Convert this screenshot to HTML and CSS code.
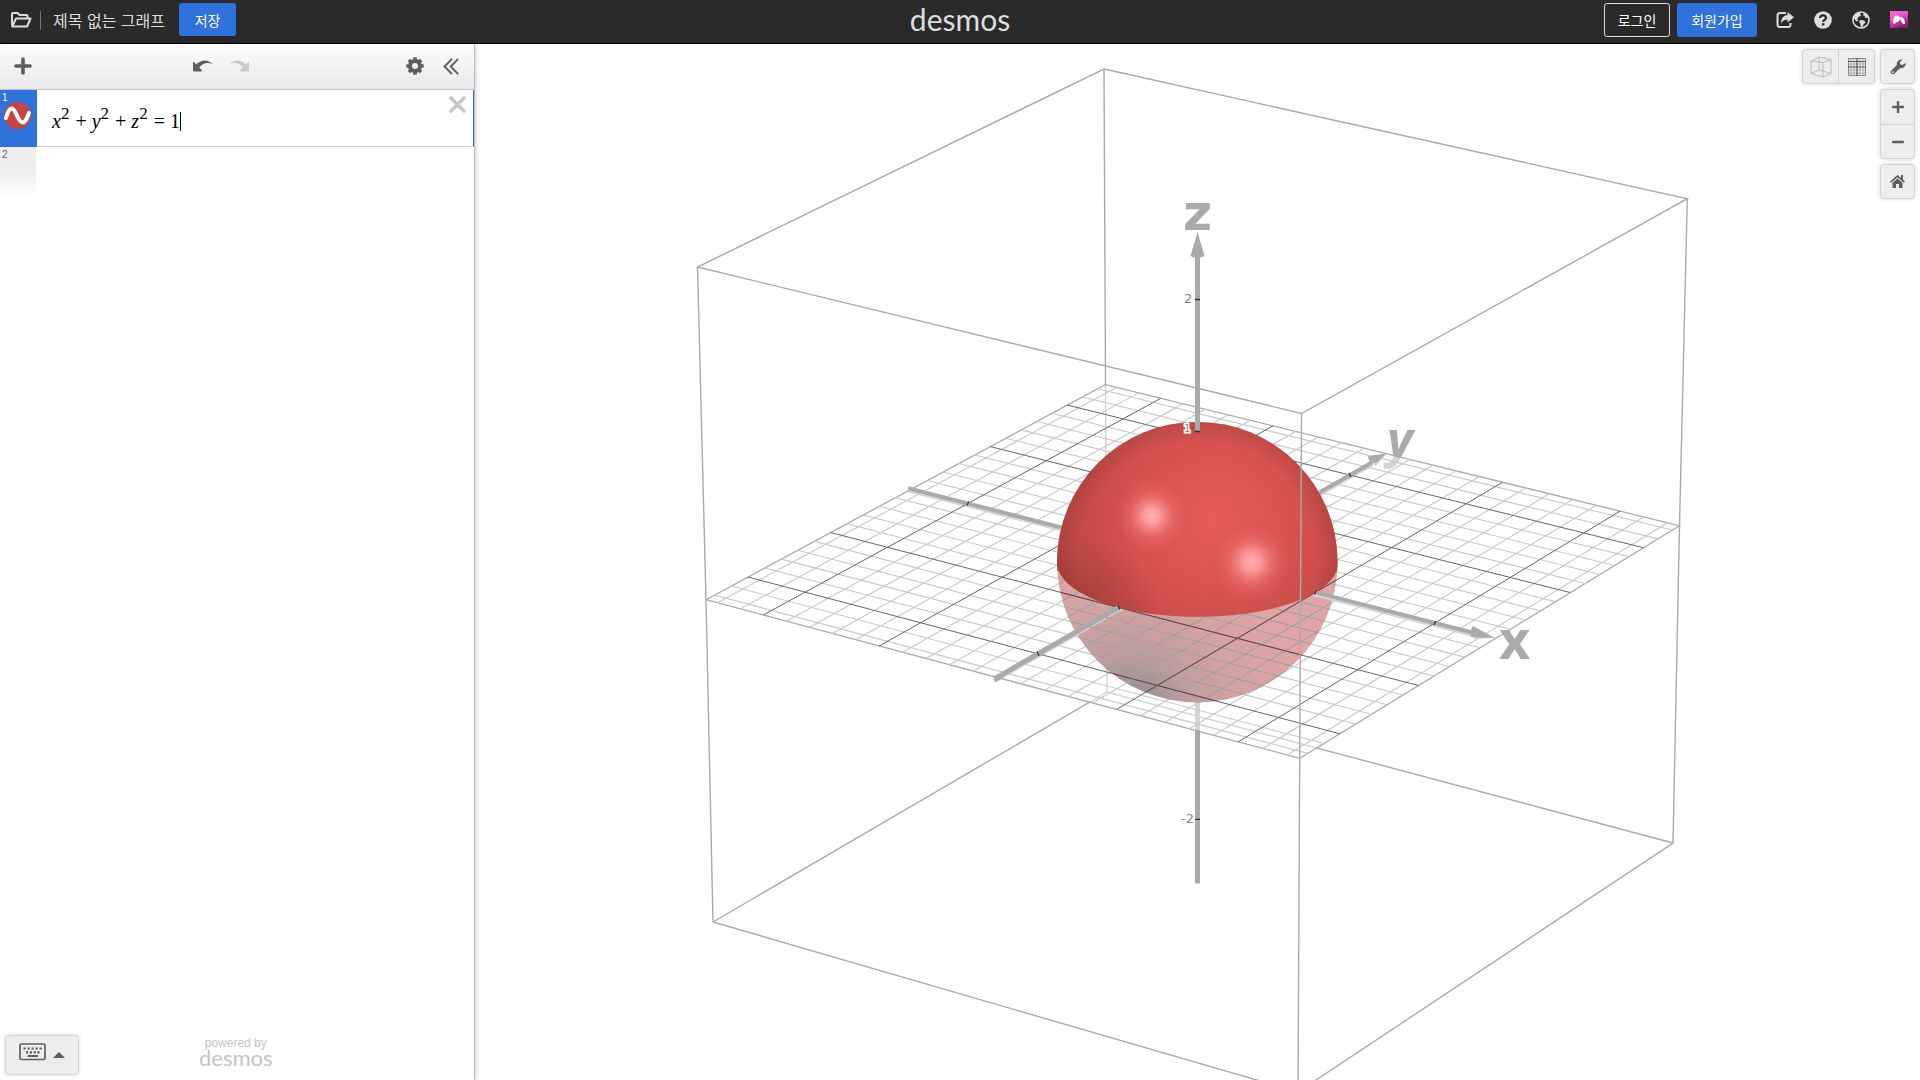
FILE: index.html
```html
<!DOCTYPE html>
<html lang="ko">
<head>
  <meta charset="UTF-8">
  <meta name="viewport" content="width=device-width, initial-scale=1">
  <title>Desmos | 3D</title>
  <link rel="stylesheet" href="styles.css">
</head>
<body>
  <header class="header">
    <div class="header-left">
      <button class="icon-btn folder-btn" aria-label="그래프 열기">
        <svg width="22" height="18" viewBox="0 0 22 18" fill="none" stroke="#ddd" stroke-width="2" stroke-linejoin="round"><path d="M2 14V3.200Q2 2 3.200 2H7.500L9.500 4H16.500Q17.600 4 17.600 5.200V7M2.200 15.500L6 7.500H20.500L17 15.500Z"/></svg>
      </button>
      <span class="divider"></span>
      <button class="graph-title">제목 없는 그래프</button>
      <button class="btn btn-blue save-btn">저장</button>
    </div>
    <a class="logo" href="#">desmos</a>
    <div class="header-right">
      <button class="btn btn-outline">로그인</button>
      <button class="btn btn-blue signup-btn">회원가입</button>
      <button class="icon-btn" aria-label="공유">
        <svg width="18" height="18" viewBox="0 0 18 18"><path d="M10 2H4Q1.500 2 1.500 4.500V13.500Q1.500 16 4 16H12Q14.500 16 14.500 13.500V12" fill="none" stroke="#ddd" stroke-width="2"/><path d="M11.500 1L18 6.300L11.500 11.500V8.600Q7.500 8.500 5 12.500Q5 4.500 11.500 4Z" fill="#ddd"/></svg>
      </button>
      <button class="icon-btn" aria-label="도움말">
        <svg width="18" height="18" viewBox="0 0 18 18"><circle cx="9" cy="9" r="8.800" fill="#ddd"/><path d="M6 7Q6 4.300 9 4.300T12 6.800Q12 8 10.500 8.900Q9.300 9.500 9.300 11" fill="none" stroke="#2a2a2a" stroke-width="2.200"/><rect x="8" y="12.200" width="2.400" height="2.300" fill="#2a2a2a"/></svg>
      </button>
      <button class="icon-btn" aria-label="언어">
        <svg width="18" height="18" viewBox="0 0 18 18"><circle cx="9" cy="9" r="8" fill="none" stroke="#ddd" stroke-width="1.600"/><path d="M2 5L5 1.800L9 1L8 3L9.500 4L7.500 5.500L6 6.500L5 8L6.500 9.500L5 10.500L2 8ZM11 1.500L14 3L16.500 6.500L14.500 7L12.500 6.500L13 5L11 4.500L11.500 3ZM8 9L12 9.500L13.500 11.500L11.500 13.500L10 16.500L8.500 15L8.500 12.500L7 11Z" fill="#ddd"/></svg>
      </button>
      <button class="icon-btn" aria-label="내 계정">
        <svg width="18" height="18" viewBox="0 0 18 18"><defs><linearGradient id="avatarFill" x1="0" y1="0" x2=".5" y2="1"><stop offset="0" stop-color="#ff6be0"/><stop offset=".45" stop-color="#ee55cc"/><stop offset="1" stop-color="#8c1a70"/></linearGradient></defs><rect width="18" height="17" fill="url(#avatarFill)"/><path d="M3 12Q3 4.500 7 4.500Q8.500 4.500 9.500 6Q14.500 5.500 15 12Q15 13.500 13 13Q11.500 11 10 8Q9 12 6.500 11L4.500 13Z" fill="#fff"/></svg>
      </button>
    </div>
  </header>

  <main class="main">
    <aside class="panel">
      <div class="toolbar">
        <button class="icon-btn" aria-label="항목 추가">
          <svg width="18" height="18" viewBox="0 0 18 18"><path d="M9 2V16M2 9H16" stroke="#5e5e5e" stroke-width="3.600" stroke-linecap="round"/></svg>
        </button>
        <div class="history">
          <button class="icon-btn" aria-label="실행 취소">
            <svg width="20" height="12" viewBox="0 0 20 12"><path d="M0 1.500L3 4.300Q12-3.500 20 4.300Q12 .800 6.200 7.500L9 10.500Q9 11.500 8 11.500H1Q0 11.500 0 10.500Z" fill="#5e5e5e"/></svg>
          </button>
          <button class="icon-btn" aria-label="다시 실행" disabled>
            <svg width="20" height="12" viewBox="0 0 20 12"><path d="M20 1.500L17 4.300Q8-3.500 0 4.300Q8 .800 13.800 7.500L11 10.500Q11 11.500 12 11.500H19Q20 11.500 20 10.500Z" fill="#c9c9c9"/></svg>
          </button>
        </div>
        <div class="tools">
          <button class="icon-btn" aria-label="목록 편집">
            <svg width="18" height="18" viewBox="0 0 18 18"><circle cx="9" cy="9" r="5" fill="none" stroke="#5e5e5e" stroke-width="4"/><path d="M9 .300V4M9 14V17.700M.300 9H4M14 9H17.700M2.900 2.900L5.500 5.500M12.500 12.500L15.100 15.100M2.900 15.100L5.500 12.500M12.500 5.500L15.100 2.900" stroke="#5e5e5e" stroke-width="3.600"/></svg>
          </button>
          <button class="icon-btn" aria-label="목록 숨기기">
            <svg width="16" height="17" viewBox="0 0 16 17" fill="none" stroke="#5e5e5e" stroke-width="1.900"><path d="M9 .800L1.500 8.500L9 16.200M15.200 .800L7.700 8.500L15.200 16.200"/></svg>
          </button>
        </div>
      </div>

      <div class="expression active">
        <div class="tab">
          <span class="number">1</span>
          <button class="icon-btn color-btn" aria-label="수식 1 숨기기">
            <svg width="27" height="27" viewBox="0 0 27 27"><circle cx="13.500" cy="13.500" r="13.500" fill="#c74440"/><path d="M2 16C4.500 8 6 6 8 6.500C12 7.500 14 20.500 18.500 20.500C21.500 20.500 23 16 25 11" fill="none" stroke="#fff" stroke-width="4" stroke-linecap="round"/></svg>
          </button>
        </div>
        <div class="math" role="textbox" tabindex="0" aria-label="수식 1"><i>x</i><sup>2</sup><b>+</b><i>y</i><sup>2</sup><b>+</b><i>z</i><sup>2</sup><b>=</b><span>1</span><span class="caret"></span></div>
        <button class="icon-btn delete-btn" aria-label="수식 삭제">
          <svg width="17" height="17" viewBox="0 0 17 17"><path d="M2 2L15 15M15 2L2 15" stroke="#c8c8c8" stroke-width="3.600" stroke-linecap="round"/></svg>
        </button>
      </div>
      <div class="expression next">
        <div class="tab"><span class="number">2</span></div>
      </div>

      <div class="panel-footer">
        <button class="keypad-btn" aria-label="키패드 표시">
          <svg width="27" height="18" viewBox="0 0 27 18" fill="none" stroke="#5e5e5e"><rect x="1" y="1" width="25" height="15.500" rx="1.500" stroke-width="1.700"/><path d="M4.500 5.500H23" stroke-width="2.200" stroke-dasharray="2.200 1.800"/><path d="M7 9.300H21" stroke-width="2.200" stroke-dasharray="2.200 1.600"/><path d="M8.500 13H19" stroke-width="2"/></svg>
          <svg width="12" height="6" viewBox="0 0 12 6"><path d="M6 0L12 6H0Z" fill="#5e5e5e"/></svg>
        </button>
        <div class="powered">
          <span>powered by</span>
          <a href="#">desmos</a>
        </div>
      </div>
    </aside>

    <section class="graph">
      <svg class="scene" viewBox="475 44 1445 1036" preserveAspectRatio="xMidYMid slice" aria-label="3D 그래프">
        <defs>
          <radialGradient id="sphereTop" gradientUnits="userSpaceOnUse" cx="1215" cy="520" r="195">
            <stop offset="0" stop-color="#e55b58"/>
            <stop offset=".35" stop-color="#da5451"/>
            <stop offset=".65" stop-color="#c64c49"/>
            <stop offset=".85" stop-color="#b84744"/>
            <stop offset="1" stop-color="#a8403e"/>
          </radialGradient>
          <radialGradient id="edgeShade" gradientUnits="userSpaceOnUse" cx="1197" cy="562" r="140">
            <stop offset=".85" stop-color="#5a1e1c" stop-opacity="0"/>
            <stop offset="1" stop-color="#5a1e1c" stop-opacity=".14"/>
          </radialGradient>
          <radialGradient id="cornerShade" gradientUnits="userSpaceOnUse" cx="1075" cy="625" r="90">
            <stop offset="0" stop-color="#7a2a28" stop-opacity=".45"/>
            <stop offset="1" stop-color="#7a2a28" stop-opacity="0"/>
          </radialGradient>
          <radialGradient id="shine">
            <stop offset="0" stop-color="#ffb0b0"/>
            <stop offset=".25" stop-color="#ffa3a3" stop-opacity=".85"/>
            <stop offset=".6" stop-color="#f98783" stop-opacity=".3"/>
            <stop offset="1" stop-color="#f07570" stop-opacity="0"/>
          </radialGradient>
          <radialGradient id="sphereBottom" gradientUnits="userSpaceOnUse" cx="1130" cy="710" r="180">
            <stop offset="0" stop-color="#1e1818"/>
            <stop offset=".15" stop-color="#3d2b2a"/>
            <stop offset=".35" stop-color="#853c3a"/>
            <stop offset=".6" stop-color="#a84543"/>
            <stop offset="1" stop-color="#c14d4b"/>
          </radialGradient>
          <clipPath id="upperHalf">
            <rect x="1050" y="410" width="300" height="161"/>
            <path id="disc"/>
          </clipPath>
          <clipPath id="sphereOutline">
            <circle cx="1197.300" cy="562.200" r="140.300"/>
          </clipPath>
        </defs>

        <!-- everything under or behind the xy plane -->
        <g class="box">
          <path d="M1104 69L1107 692M713 922L1107 692L1673 843"/>
        </g>
        <path class="axis" d="M1197.500 690V740" stroke-width="5"/>
        <circle cx="1197.300" cy="562.200" r="140.300" fill="url(#sphereBottom)"/>
        <g id="axesBelow"></g>
        <path class="solid" d="M1470 632L1495 638L1474 639ZM1369 460L1386 454L1376 466Z"/>
        <text class="axis-name label-y" x="1387" y="457">y</text>

        <path id="plane" class="plane"/>
        <g id="grid"></g>
        <g id="gridOnSphere" class="shaded" clip-path="url(#sphereOutline)"></g>
        <g id="axesAbove"></g>
        <path class="solid" d="M1495 638L1473 626Q1469 631 1471 637ZM1386.500 453.500L1368 456Q1368 462 1376 463Z"/>

        <!-- upper half of the sphere -->
        <g clip-path="url(#upperHalf)">
          <circle cx="1197.300" cy="562.200" r="140.300" fill="url(#sphereTop)"/>
          <circle cx="1197.300" cy="562.200" r="140.300" fill="url(#edgeShade)"/>
          <circle cx="1197.300" cy="562.200" r="140.300" fill="url(#cornerShade)"/>
          <circle cx="1151.700" cy="515.700" r="36" fill="url(#shine)"/>
          <circle cx="1251.700" cy="562" r="38" fill="url(#shine)"/>
        </g>
        <g id="axesFront"></g>

        <!-- z axis -->
        <path class="axis" d="M1197.500 255V431.500M1197.500 730V883.500" stroke-width="5"/>
        <path class="solid" d="M1197.500 232L1204.500 256Q1197.500 260 1190.500 256Z"/>
        <path class="tick" d="M1195 299.500H1200M1195 431.500H1200M1195 819.300H1200"/>
        <text class="tick-label" x="1184" y="303">2</text>
        <text class="tick-label halo" x="1184" y="432">1</text>
        <text class="tick-label" x="1181" y="823">-2</text>
        <text class="axis-name" x="1183" y="230">z</text>
        <text class="axis-name label-x" x="1499" y="659">x</text>

        <!-- near edges of the bounding box -->
        <g class="box">
          <path d="M1104 69L1687.300 198.700L1301.500 413.500L697.500 267Z"/>
          <path d="M697.500 267L706 600L713 922L1298 1092L1673 843L1679.500 526L1687.300 198.700M1301.500 413.500L1299.700 758L1298 1092"/>
        </g>
      </svg>

      <div class="controls">
        <div class="btn-group row">
          <button aria-label="상자 표시">
            <svg width="22" height="22" viewBox="0 0 22 22" fill="none" stroke="#bbb" stroke-width="1"><path d="M1 5L13 6.500V21L1 17.500ZM13 6.500L21 3.500V17.500L13 21M1 5L9 1L21 3.500M9 1V14L1 17.500M9 14L21 17.500"/></svg>
          </button>
          <button aria-label="격자 표시">
            <svg width="18" height="18" viewBox="0 0 18 18" fill="none"><path d="M3 0V18M6 0V18M12 0V18M15 0V18M0 6H18M0 12H18M0 15H18" stroke="#999" stroke-width=".700"/><path d="M.500 .500H17.500V17.500H.500Z" stroke="#888"/><path d="M9 0V18M0 3.500H18M0 9H18" stroke="#555" stroke-width="1.200"/></svg>
          </button>
        </div>
        <div class="controls-column">
          <div class="btn-group">
            <button aria-label="그래프 설정">
              <svg width="16" height="16" viewBox="0 0 16 16"><path d="M3 13L9 7" stroke="#5e5e5e" stroke-width="4.400" stroke-linecap="round"/><path d="M12.500 .700L9.800 3.200L10.300 5.500L12.600 6L15.600 3.800Q16 7.500 12.800 8.900Q10 9.700 7.700 8.200Q5.800 5 7.700 2.300Q9.500 .200 12.500 .700Z" fill="#5e5e5e"/><circle cx="2.900" cy="13.100" r=".900" fill="#ededed"/></svg>
            </button>
          </div>
          <div class="btn-group zoom">
            <button aria-label="확대">
              <svg width="12" height="12" viewBox="0 0 12 12"><path d="M6 1V11M1 6H11" stroke="#5e5e5e" stroke-width="2.400" stroke-linecap="round"/></svg>
            </button>
            <button aria-label="축소">
              <svg width="12" height="12" viewBox="0 0 12 12"><path d="M1 6H11" stroke="#5e5e5e" stroke-width="2.400" stroke-linecap="round"/></svg>
            </button>
          </div>
          <div class="btn-group">
            <button aria-label="기본 보기">
              <svg width="15" height="13" viewBox="0 0 15 13"><path d="M.500 7.200L7.500 1.200L14.500 7.200" fill="none" stroke="#5e5e5e" stroke-width="1.700"/><path d="M11 0H13V5L11 3.500ZM2.500 7.700L7.500 3.500L12.500 7.700V13H9V9H6V13H2.500Z" fill="#5e5e5e"/></svg>
            </button>
          </div>
        </div>
      </div>
    </section>
  </main>
  <script src="script.js"></script>
</body>
</html>
```
FILE: styles.css
```css
* {
  box-sizing: border-box;
}

body {
  margin: 0;
  height: 100vh;
  display: flex;
  flex-direction: column;
  overflow: hidden;
  background: #fff;
  font-family: "Noto Sans CJK KR", "Liberation Sans", sans-serif;
}

button {
  margin: 0;
  padding: 0;
  border: none;
  background: none;
  font: inherit;
  cursor: pointer;
}

a {
  text-decoration: none;
}

svg {
  display: block;
}

.icon-btn {
  display: flex;
}

/* header */
.header {
  display: grid;
  grid-template-columns: 1fr auto 1fr;
  flex: none;
  height: 44px;
  background: #2a2a2a;
  border-bottom: 1px solid #000;
}

.header-left,
.header-right {
  display: flex;
  align-items: center;
}

.header-left {
  padding: 0 0 4px 10px;
}

.header-right {
  justify-content: flex-end;
  gap: 20px;
  padding: 0 12px 3px 0;
}

.divider {
  width: 1px;
  height: 19px;
  margin: 2px 12px 0 8px;
  background: #777;
}

.graph-title {
  color: #ddd;
  font-size: 16px;
  margin-right: 14px;
}

.btn {
  height: 34px;
  border-radius: 3px;
  font-size: 14px;
  line-height: 20px;
  color: #fff;
}

.btn-blue {
  background: #2f72dc;
}

.btn-outline {
  width: 66px;
  border: 1px solid #ddd;
  margin-right: -13px;
}

.save-btn {
  width: 57px;
  height: 33px;
}

.signup-btn {
  width: 80px;
  margin-right: -1px;
}

.logo {
  color: #ddd;
  font-family: Lato, sans-serif;
  font-size: 30px;
  line-height: 38px;
}

/* expression list */
.main {
  display: flex;
  flex: 1;
  min-height: 0;
}

.panel {
  display: flex;
  flex-direction: column;
  flex: none;
  width: 475px;
  border-right: 1px solid #bbb;
  box-shadow: 0 0 6px rgba(0, 0, 0, 0.25);
  background: #fff;
  z-index: 1;
}

.toolbar {
  display: grid;
  grid-template-columns: 1fr auto 1fr;
  align-items: center;
  height: 46px;
  padding: 0 15px 1px 14px;
  background: linear-gradient(#fcfcfc, #e9e9e9);
  border-bottom: 1px solid #c4c4c4;
}

.history {
  display: flex;
  gap: 16px;
  margin-left: -32px;
}

.tools {
  display: flex;
  justify-content: flex-end;
  align-items: center;
  gap: 19px;
}

.expression {
  display: flex;
}

.active {
  height: 57px;
  border-right: 1px solid #2f72dc;
  border-bottom: 1px solid #d3d3d3;
}

.tab {
  width: 37px;
  padding: 3px 2px;
}

.active .tab {
  height: 57px;
  background: #2f72dc;
  color: #fff;
}

.next .tab {
  width: 36px;
  height: 50px;
  background: linear-gradient(#eee 50%, #fff);
  color: #666;
}

.number {
  display: block;
  font-family: "Liberation Sans", sans-serif;
  font-size: 10px;
  line-height: 9px;
}

.color-btn {
  margin-left: 2px;
}

.math {
  display: flex;
  flex: 1;
  align-items: baseline;
  padding: 19px 0 0 15px;
  font-family: "Liberation Serif", serif;
  font-size: 20px;
  line-height: 24px;
  outline: none;
}

.math sup {
  position: relative;
  top: -9px;
  font-size: 17px;
  line-height: 1;
  vertical-align: baseline;
}

.math b {
  font-weight: normal;
  margin: 0 5px 0 6px;
}

.caret {
  align-self: flex-start;
  width: 1px;
  height: 19px;
  margin-top: 3px;
  background: #000;
}

.delete-btn {
  align-self: flex-start;
  padding: 6px 7px;
}

.panel-footer {
  display: flex;
  align-items: flex-end;
  margin-top: auto;
  padding: 5px;
}

.keypad-btn {
  display: flex;
  align-items: center;
  justify-content: center;
  gap: 7px;
  width: 74px;
  height: 40px;
  padding-bottom: 6px;
  border: 1px solid #d6d6d6;
  border-radius: 4px;
  background: #ededed;
  box-shadow: 0 0 4px rgba(0, 0, 0, 0.15);
}

.keypad-btn svg + svg {
  margin-top: 6px;
}

.powered {
  display: flex;
  flex-direction: column;
  align-items: center;
  margin-left: 120px;
  padding-bottom: 8px;
  color: #c4c4c4;
  font-family: "Liberation Sans", sans-serif;
  font-size: 12px;
  line-height: 12px;
}

.powered a {
  color: #c4c4c4;
  font-family: Lato, sans-serif;
  font-size: 22px;
  line-height: 18px;
}

/* graph paper */
.graph {
  position: relative;
  flex: 1;
  min-width: 0;
}

.scene {
  width: 100%;
  height: 100%;
}

.box {
  fill: none;
  stroke: #aaa;
  stroke-width: 1.4;
}

.plane {
  fill: rgba(255, 255, 255, 0.5);
  stroke: #aaa;
  stroke-width: 1.3;
}

.minor {
  stroke: #c8c8c8;
  stroke-width: 1.1;
}

.major {
  stroke: #666;
  stroke-width: 1;
}

.shaded .minor {
  stroke: #a89696;
}

.shaded .major {
  stroke: #6b4a4a;
}

.axis {
  stroke: #aaa;
}

.solid {
  fill: #aaa;
}

.tick {
  stroke: #333;
  stroke-width: 1.3;
}

.tick-label {
  fill: #888;
  font-family: "DejaVu Sans", sans-serif;
  font-size: 13px;
}

.halo {
  stroke: #fff;
  stroke-width: 3px;
  paint-order: stroke;
  font-size: 10px;
}

.axis-name {
  fill: #aaa;
  font-family: "DejaVu Sans", sans-serif;
  font-size: 50px;
  font-weight: bold;
}

.label-x,
.label-y {
  font-family: "Liberation Sans Narrow", "Open Sans", sans-serif;
  font-size: 54px;
}

.label-y {
  font-size: 50px;
  font-style: italic;
}

/* floating buttons */
.controls {
  position: absolute;
  top: 5px;
  right: 5px;
  display: flex;
  align-items: flex-start;
  gap: 5px;
}

.controls-column {
  display: flex;
  flex-direction: column;
  gap: 5px;
}

.btn-group {
  display: flex;
  flex-direction: column;
  border: 1px solid #d3d3d3;
  border-radius: 4px;
  background: #ededed;
  box-shadow: 0 0 4px rgba(0, 0, 0, 0.15);
}

.btn-group button {
  display: flex;
  align-items: center;
  justify-content: center;
  width: 33px;
  height: 33px;
}

.zoom button {
  height: 34px;
}

.btn-group button + button {
  border-top: 1px solid #d3d3d3;
}

.row {
  flex-direction: row;
}

.row button {
  width: 35px;
}

.row button + button {
  width: 36px;
  border-top: none;
  border-left: 1px solid #d3d3d3;
}
```
FILE: script.js
```js
const SVG_NS = "http://www.w3.org/2000/svg";
const range = 2.5;

// screen corners of the xy plane: (-,-) (+,-) (+,+) (-,+)
const corners = [[706, 599.7], [1299.7, 758.3], [1679.4, 525.7], [1105.3, 384.7]];

// perspective map from the unit square to the four corners
const [[x0, y0], [x1, y1], [x2, y2], [x3, y3]] = corners;
const dx1 = x1 - x2, dx2 = x3 - x2, dx3 = x0 - x1 + x2 - x3;
const dy1 = y1 - y2, dy2 = y3 - y2, dy3 = y0 - y1 + y2 - y3;
const det = dx1 * dy2 - dx2 * dy1;
const g = (dx3 * dy2 - dx2 * dy3) / det;
const h = (dx1 * dy3 - dx3 * dy1) / det;

function project(x, y) {
  const u = (x + range) / (2 * range);
  const v = (y + range) / (2 * range);
  const w = g * u + h * v + 1;
  return [
    ((x1 - x0 + g * x1) * u + (x3 - x0 + h * x3) * v + x0) / w,
    ((y1 - y0 + g * y1) * u + (y3 - y0 + h * y3) * v + y0) / w
  ];
}

function drawLine(parent, from, to, className, width, drop = 0) {
  const [ax, ay] = project(...from);
  const [bx, by] = project(...to);
  const line = document.createElementNS(SVG_NS, "line");
  line.setAttribute("x1", ax);
  line.setAttribute("y1", ay + drop);
  line.setAttribute("x2", bx);
  line.setAttribute("y2", by + drop);
  line.setAttribute("class", className);
  if (width) line.setAttribute("stroke-width", width);
  document.getElementById(parent).appendChild(line);
}

function drawGrid(parent) {
  // minor lines first so the major ones stay on top
  for (const major of [false, true]) {
    for (let i = -12; i <= 12; i++) {
      if ((i % 5 === 0) !== major || i === 0) continue;
      const t = i / 5;
      const name = major ? "major" : "minor";
      drawLine(parent, [t, -range], [t, range], name);
      drawLine(parent, [-range, t], [range, t], name);
    }
  }
}

function drawAxes() {
  const start = -range - 0.03;
  const end = range - 0.2;
  drawLine("axesBelow", [start, 0], [end, 0], "axis", 4, 2);
  drawLine("axesBelow", [0, start], [0, end], "axis", 4, 2);
  drawLine("axesAbove", [start, 0], [0, 0], "axis", 4);
  drawLine("axesAbove", [0, 0], [0, end], "axis", 4);
  drawLine("axesFront", [1, 0], [end, 0], "axis", 4);
  drawLine("axesFront", [0, start], [0, -1], "axis", 5);

  for (const t of [-2, 1, 2]) drawTick(t, 0);
  for (const t of [-2, -1, 2]) drawTick(0, t);
}

function drawTick(x, y) {
  const [px, py] = project(x, y);
  const tick = document.createElementNS(SVG_NS, "path");
  const lean = y === 0 ? -1 : 1;
  tick.setAttribute("d", `M${px - lean} ${py - 2}L${px + lean} ${py + 2}`);
  tick.setAttribute("class", "tick");
  document.getElementById("axesFront").appendChild(tick);
}

function toPath(points) {
  return "M" + points.map(p => p.join(" ")).join("L") + "Z";
}

document.getElementById("plane").setAttribute("d", toPath(corners));

const circle = [];
for (let a = 0; a < 360; a += 3) {
  circle.push(project(Math.cos(a * Math.PI / 180), Math.sin(a * Math.PI / 180)));
}
document.getElementById("disc").setAttribute("d", toPath(circle));

drawGrid("grid");
drawGrid("gridOnSphere");
drawAxes();
```
